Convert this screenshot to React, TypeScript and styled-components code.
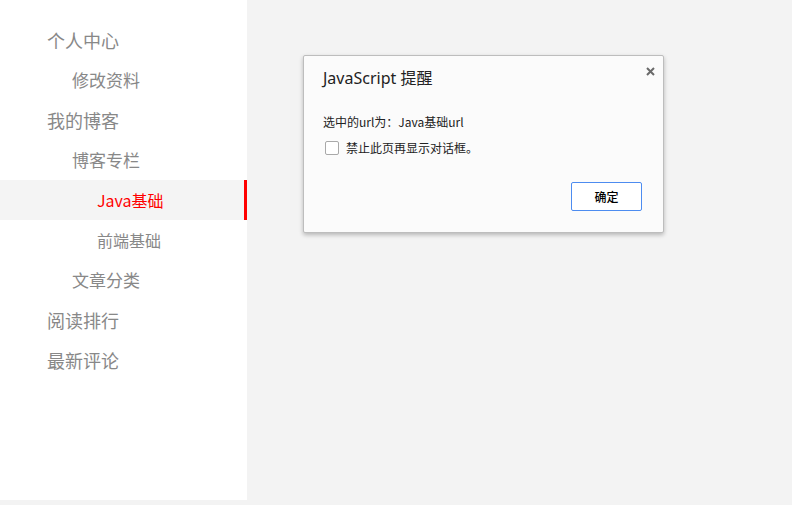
import React from "react";
import styled, { createGlobalStyle } from "styled-components";

const GlobalStyle = createGlobalStyle`
  html, body {
    margin: 0;
    padding: 0;
    background: #f3f3f3;
    font-family: "Noto Sans", "Noto Sans CJK SC", sans-serif;
  }
  * { box-sizing: border-box; }
`;

const Page = styled.div`
  display: flex;
  width: 792px;
  height: 505px;
  align-items: flex-start;
`;

const Sidebar = styled.nav`
  width: 247px;
  height: 500px;
  background: #ffffff;
  padding-top: 20px;
  display: flex;
  flex-direction: column;
`;

const sizes = [18, 17, 16];

const NavItem = styled.div<{ $level: number; $active?: boolean }>`
  height: 40px;
  line-height: 40px;
  padding-left: ${(p) => 47 + p.$level * 25}px;
  font-size: ${(p) => sizes[p.$level]}px;
  color: ${(p) => (p.$active ? "#ff0000" : "#888888")};
  background: ${(p) => (p.$active ? "#f4f4f4" : "transparent")};
  border-right: 3px solid ${(p) => (p.$active ? "#ff0000" : "transparent")};
  font-family: "Noto Sans CJK SC", sans-serif;
  white-space: nowrap;
`;

const Main = styled.main`
  flex: 1;
  padding: 55px 0 0 56px;
`;

const Dialog = styled.div`
  width: 361px;
  height: 178px;
  background: #fbfbfb;
  border: 1px solid #bdbdbd;
  border-radius: 2px;
  box-shadow: 0 2px 4px rgba(0, 0, 0, 0.25);
  padding: 10px 21px 21px 19px;
  display: flex;
  flex-direction: column;
`;

const Header = styled.div`
  display: flex;
  justify-content: space-between;
  align-items: flex-start;
  margin-right: -13px;
`;

const Title = styled.div`
  margin-top: 2px;
  font-size: 16px;
  line-height: 20px;
  color: #222;
`;

const CloseButton = styled.button`
  width: 10px;
  height: 10px;
  padding: 0;
  border: 0;
  background: none;
  display: flex;
  align-items: center;
  justify-content: center;
`;

const Message = styled.div`
  margin-top: 26px;
  font-size: 12px;
  line-height: 16px;
  color: #222;
  font-family: "Noto Sans CJK SC", sans-serif;
`;

const CheckRow = styled.label`
  margin-top: 10px;
  display: flex;
  align-items: center;
  gap: 7px;
  height: 15px;
  padding-left: 2px;
  font-size: 12px;
  color: #222;
  font-family: "Noto Sans CJK SC", sans-serif;
`;

const Box = styled.input`
  appearance: none;
  margin: 0;
  width: 14px;
  height: 14px;
  border: 1px solid #a9a9a9;
  border-radius: 2px;
  background: #fff;
`;

const Footer = styled.div`
  margin-top: auto;
  display: flex;
  justify-content: flex-end;
`;

const OkButton = styled.button`
  width: 71px;
  height: 29px;
  border: 1px solid #4d8cf0;
  border-radius: 2px;
  background: #ffffff;
  font-family: "Noto Sans CJK SC", sans-serif;
  font-size: 12px;
  font-weight: 500;
  color: #000;
  padding: 0;
`;

const items: { label: string; level: number; active?: boolean }[] = [
  { label: "个人中心", level: 0 },
  { label: "修改资料", level: 1 },
  { label: "我的博客", level: 0 },
  { label: "博客专栏", level: 1 },
  { label: "Java基础", level: 2, active: true },
  { label: "前端基础", level: 2 },
  { label: "文章分类", level: 1 },
  { label: "阅读排行", level: 0 },
  { label: "最新评论", level: 0 },
];

export default function App() {
  return (
    <>
      <GlobalStyle />
      <Page>
        <Sidebar>
          {items.map((it) => (
            <NavItem key={it.label} $level={it.level} $active={it.active}>
              {it.label}
            </NavItem>
          ))}
        </Sidebar>
        <Main>
          <Dialog>
            <Header>
              <Title>JavaScript 提醒</Title>
              <CloseButton aria-label="close">
                <svg width="9" height="9" viewBox="0 0 9 9">
                  <path d="M1 1L8 8M8 1L1 8" stroke="#6a6a6a" strokeWidth="2" />
                </svg>
              </CloseButton>
            </Header>
            <Message>选中的url为：Java基础url</Message>
            <CheckRow>
              <Box type="checkbox" />
              禁止此页再显示对话框。
            </CheckRow>
            <Footer>
              <OkButton>确定</OkButton>
            </Footer>
          </Dialog>
        </Main>
      </Page>
    </>
  );
}
